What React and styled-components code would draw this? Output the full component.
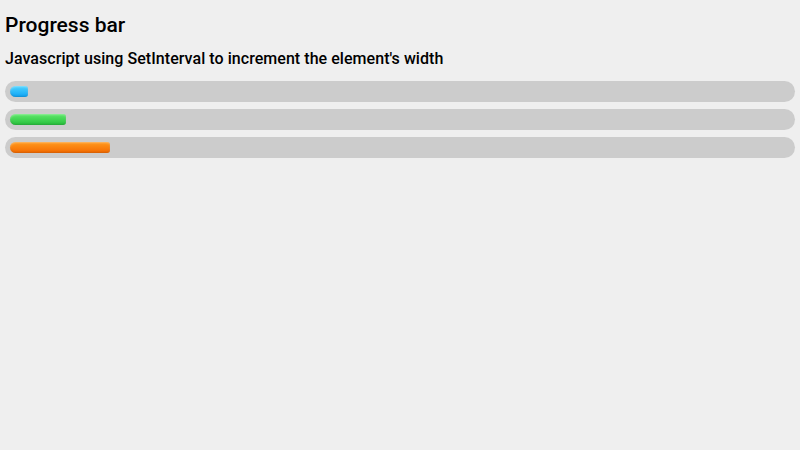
import React from "react";
import styled, { createGlobalStyle } from "styled-components";

const Global = createGlobalStyle`
  html, body { margin: 0; padding: 0; background: #efefef; }
  body { font-family: Roboto, "Liberation Sans", sans-serif; color: #000; }
`;

const Page = styled.div`
  padding: 12px 5px;
  display: flex;
  flex-direction: column;
`;

const Title = styled.h1`
  margin: 0;
  font-size: 21px;
  font-weight: 500;
  line-height: 26px;
`;

const Subtitle = styled.h2`
  margin: 12px 0 13px;
  font-size: 16px;
  font-weight: 500;
  letter-spacing: 0.05px;
  line-height: 18px;
`;

const Bars = styled.div`
  display: flex;
  flex-direction: column;
  gap: 7px;
`;

const Track = styled.div`
  height: 11px;
  padding: 5px;
  background: #cccccc;
  border-radius: 11px;
`;

const Meter = styled.div`
  height: 100%;
  border-radius: 6px 3px 3px 6px;
  background: linear-gradient(to bottom, ${(p) => p.$top}, ${(p) => p.$bottom});
  box-shadow: inset 0 1px 2px rgba(255,255,255,0.35), inset 0 -1px 2px rgba(0,0,0,0.15);
`;

const bars = [
  { w: 18, top: "#4cd3ff", bottom: "#0fa4f5" },
  { w: 56, top: "#5ee86a", bottom: "#28c13c" },
  { w: 100, top: "#ff9a1e", bottom: "#f56a00" },
];

export default function App() {
  return (
    <>
      <Global />
      <Page>
        <Title>Progress bar</Title>
        <Subtitle>Javascript using SetInterval to increment the element's width</Subtitle>
        <Bars>
          {bars.map((b, i) => (
            <Track key={i}>
              <Meter $top={b.top} $bottom={b.bottom} style={{ width: b.w }} />
            </Track>
          ))}
        </Bars>
      </Page>
    </>
  );
}
